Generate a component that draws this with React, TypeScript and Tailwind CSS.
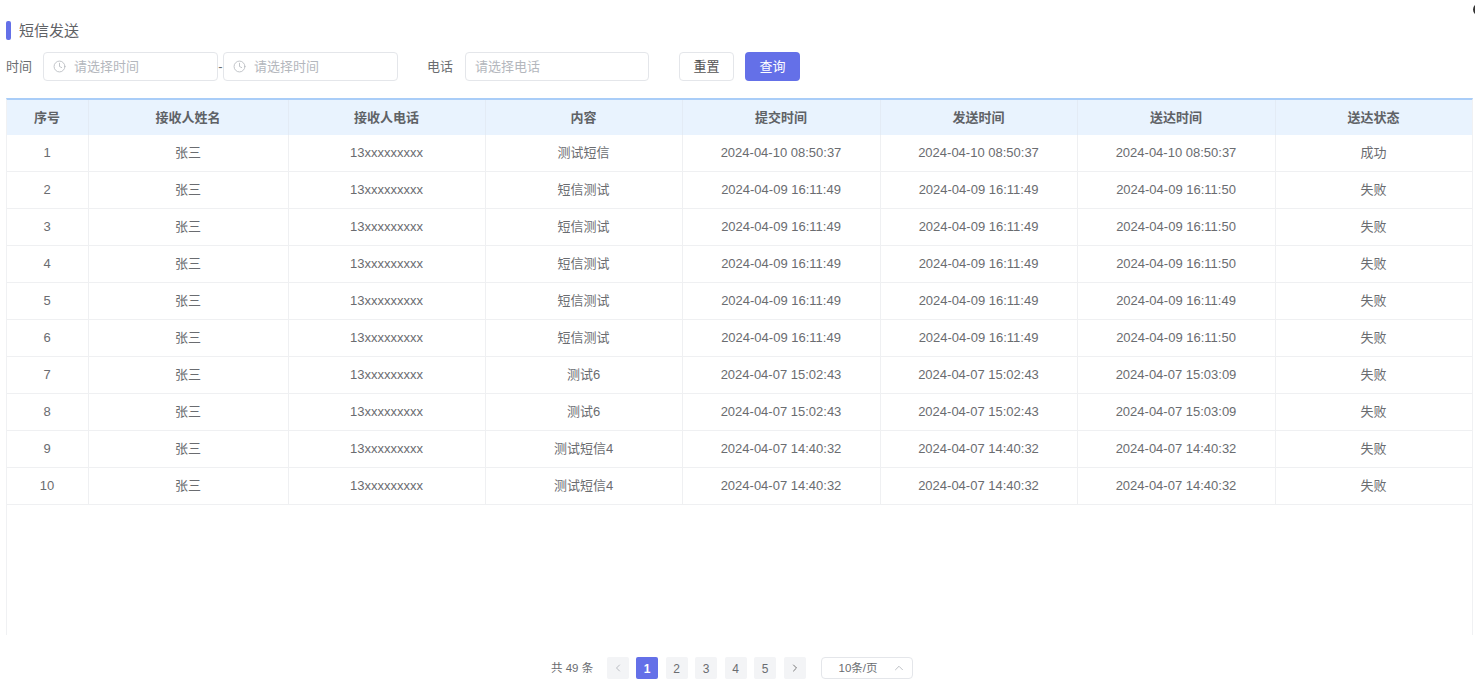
import { ChevronLeft, ChevronRight, ChevronUp, Clock } from 'lucide-react'

const rows = [
  ['1', '测试短信', '2024-04-10 08:50:37', '2024-04-10 08:50:37', '2024-04-10 08:50:37', '成功'],
  ['2', '短信测试', '2024-04-09 16:11:49', '2024-04-09 16:11:49', '2024-04-09 16:11:50', '失败'],
  ['3', '短信测试', '2024-04-09 16:11:49', '2024-04-09 16:11:49', '2024-04-09 16:11:50', '失败'],
  ['4', '短信测试', '2024-04-09 16:11:49', '2024-04-09 16:11:49', '2024-04-09 16:11:50', '失败'],
  ['5', '短信测试', '2024-04-09 16:11:49', '2024-04-09 16:11:49', '2024-04-09 16:11:49', '失败'],
  ['6', '短信测试', '2024-04-09 16:11:49', '2024-04-09 16:11:49', '2024-04-09 16:11:50', '失败'],
  ['7', '测试6', '2024-04-07 15:02:43', '2024-04-07 15:02:43', '2024-04-07 15:03:09', '失败'],
  ['8', '测试6', '2024-04-07 15:02:43', '2024-04-07 15:02:43', '2024-04-07 15:03:09', '失败'],
  ['9', '测试短信4', '2024-04-07 14:40:32', '2024-04-07 14:40:32', '2024-04-07 14:40:32', '失败'],
  ['10', '测试短信4', '2024-04-07 14:40:32', '2024-04-07 14:40:32', '2024-04-07 14:40:32', '失败'],
]

const headers = ['序号', '接收人姓名', '接收人电话', '内容', '提交时间', '发送时间', '送达时间', '送达状态']
const gridCols = 'grid grid-cols-[82px_200px_197px_197px_198px_197px_198px_1fr]'

function TimeInput() {
  return (
    <div className="w-[175px] h-[29px] flex items-center pl-[9px] border border-[#e4e6ea] rounded-[4px] text-[#b4b7bd]">
      <Clock className="w-[13px] h-[13px] mr-[8px]" strokeWidth={1.5} />
      <span>请选择时间</span>
    </div>
  )
}

export default function App() {
  return (
    <div className="relative w-[1475px] h-[698px] overflow-hidden bg-white text-[13px] text-[#6a6c70] font-['Liberation_Sans','Noto_Sans_CJK_SC',sans-serif]">
      <div className="absolute -right-[11px] top-[3px] w-[13px] h-[13px] rounded-full border-[2px] border-[#333]" />

      <div className="pt-[21px] pl-[6px] pr-[2px]">
        {/* Title */}
        <div className="flex items-center h-[19px]">
          <div className="w-[5px] h-[19px] rounded-[2px] bg-[#6470e8]" />
          <span className="ml-[8px] pt-[1px] text-[15px] text-[#5f6266]">短信发送</span>
        </div>

        {/* Filters */}
        <div className="flex items-center mt-[12px] h-[29px]">
          <span className="w-[37px]">时间</span>
          <TimeInput />
          <span className="w-[5px] text-center">-</span>
          <TimeInput />
          <span className="ml-[29px] w-[38px]">电话</span>
          <div className="w-[184px] h-[29px] flex items-center pl-[9px] border border-[#e4e6ea] rounded-[4px] text-[#b4b7bd]">
            请选择电话
          </div>
          <button className="ml-[30px] w-[55px] h-[29px] border border-[#e4e6ea] rounded-[4px] bg-white text-[#555]">重置</button>
          <button className="ml-[11px] w-[55px] h-[29px] rounded-[4px] bg-[#6470e8] text-white">查询</button>
        </div>

        {/* Table */}
        <div className="mt-[17px] h-[537px] border-t-2 border-x border-t-[#a9cdf8] border-x-[#f0f1f3]">
          <div className={`${gridCols} h-[35px] bg-[#e9f3fe] font-bold text-[#5f6266]`}>
            {headers.map((h) => (
              <div key={h} className="flex items-center justify-center pr-[1px] border-r border-[#e3ebf5] last:border-r-0">{h}</div>
            ))}
          </div>
          {rows.map((r) => (
            <div key={r[0]} className={`${gridCols} h-[37px] border-b border-[#eff0f2]`}>
              {[r[0], '张三', '13xxxxxxxxx', ...r.slice(1)].map((c, i) => (
                <div key={i} className="flex items-center justify-center pr-[1px] border-r border-[#eff0f2] last:border-r-0">{c}</div>
              ))}
            </div>
          ))}
        </div>

        {/* Pagination */}
        <div className="flex items-center mt-[22px] ml-[545px] h-[22px] text-[12px]">
          <span className="w-[56px] pt-[2px] text-[11.5px]">共 49 条</span>
          <div className="w-[22px] h-[22px] flex items-center justify-center rounded-[2px] bg-[#f3f4f6] text-[#b9bcc2]">
            <ChevronLeft className="w-[12px] h-[12px]" />
          </div>
          <div className="ml-[7px] w-[22px] h-[22px] flex items-center justify-center pt-[1px] rounded-[2px] bg-[#6470e8] text-white font-bold">1</div>
          {['2', '3', '4', '5'].map((p) => (
            <div key={p} className="ml-[7.5px] w-[22px] h-[22px] flex items-center justify-center pt-[1px] rounded-[2px] bg-[#f3f4f6]">{p}</div>
          ))}
          <div className="ml-[7.5px] w-[22px] h-[22px] flex items-center justify-center rounded-[2px] bg-[#f3f4f6] text-[#777]">
            <ChevronRight className="w-[12px] h-[12px]" />
          </div>
          <div className="ml-[15px] w-[92px] h-[22px] flex items-center justify-between pl-[17px] pr-[6px] border border-[#e4e6ea] rounded-[4px]">
            <span className="pt-[1px] text-[11.5px]">10条/页</span>
            <ChevronUp className="w-[14px] h-[14px] text-[#b4b7bd]" strokeWidth={1.5} />
          </div>
        </div>
      </div>
    </div>
  )
}
